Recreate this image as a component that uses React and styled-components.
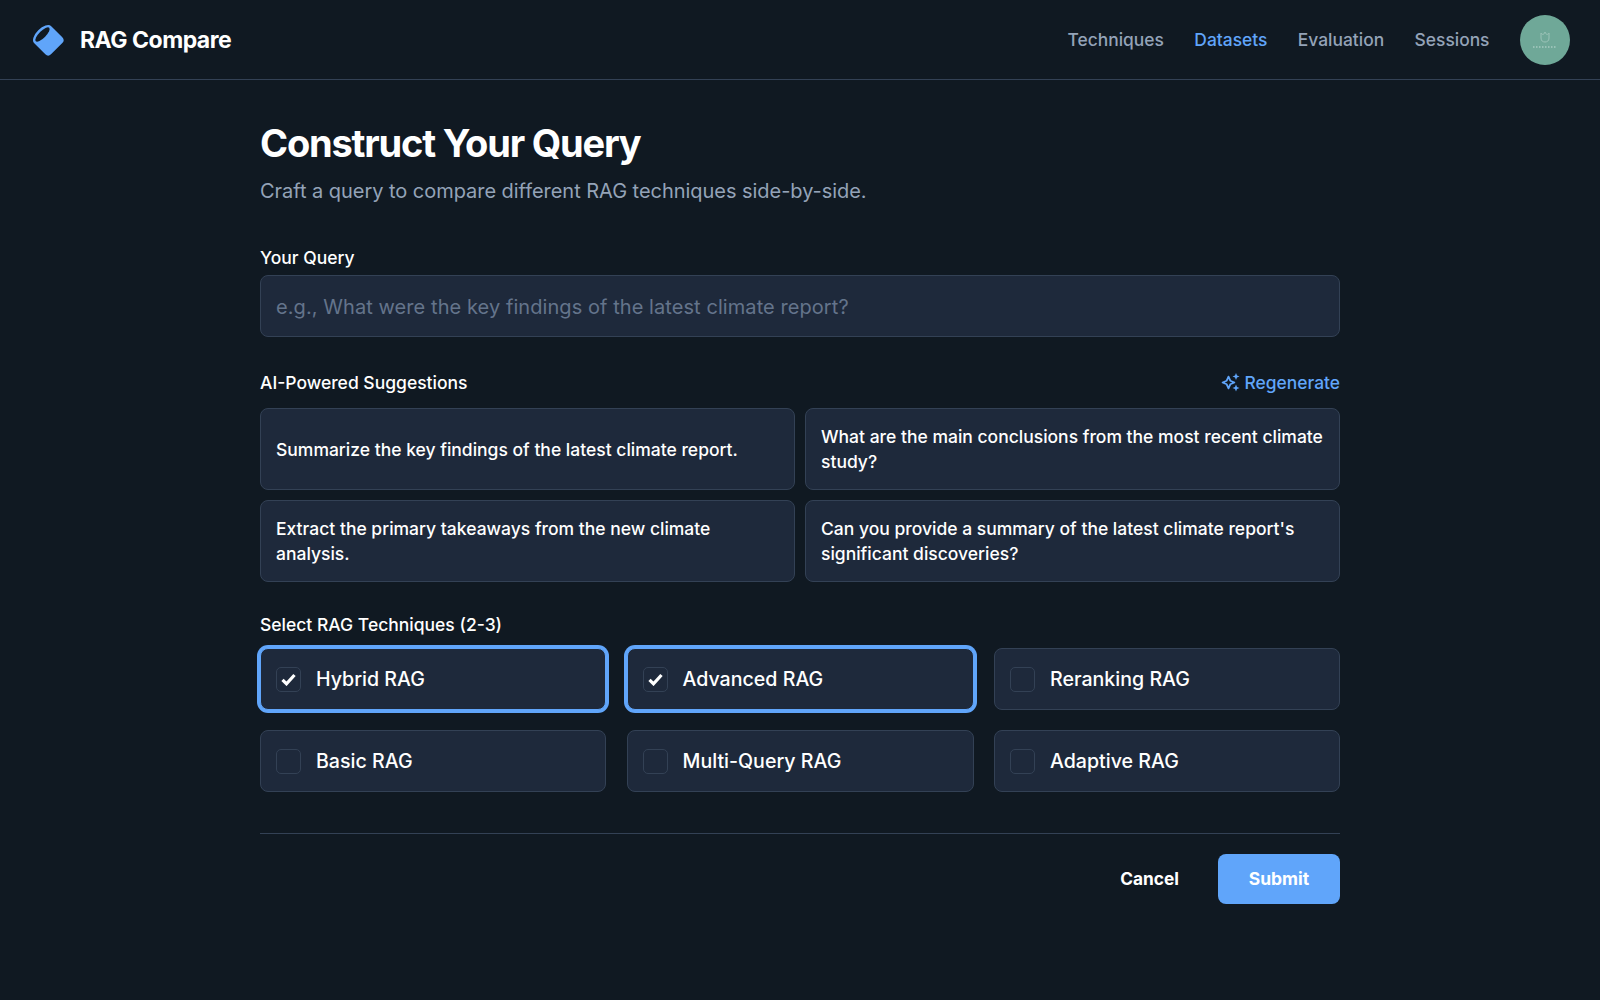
import styled, { createGlobalStyle } from 'styled-components';

const GlobalStyle = createGlobalStyle`
html, body {
  margin: 0;
  padding: 0;
  background-color: #101922;
  font-family: Inter, "Noto Sans", sans-serif;
  color: #ffffff;
}
* {
  box-sizing: border-box;
}
`;

const Page = styled.div`
min-height: 1000px;
display: flex;
flex-direction: column;
`;

const Header = styled.header`
height: 80px;
display: flex;
align-items: center;
justify-content: space-between;
padding: 0 30px 0 32px;
border-bottom: 1px solid #334155;
`;

const Brand = styled.div`
display: flex;
align-items: center;
gap: 16px;
font-size: 23px;
font-weight: 700;
letter-spacing: -0.5px;
`;

const Nav = styled.nav`
display: flex;
align-items: center;
gap: 30.5px;
`;

const NavLink = styled.a`
font-size: 17.4px;
font-weight: 500;
color: ${(props) => (props.$active ? '#60a5fa' : '#94a3b8')};
`;

const Avatar = styled.div`
width: 50px;
height: 50px;
border-radius: 50%;
background-color: #6fa898;
display: flex;
align-items: center;
justify-content: center;
`;

const Main = styled.main`
width: 1080px;
margin: 0 auto;
padding-top: 39px;
display: flex;
flex-direction: column;
`;

const Title = styled.h1`
margin: 0;
font-size: 38px;
line-height: 48px;
font-weight: 700;
letter-spacing: -1.2px;
`;

const Subtitle = styled.p`
margin: 10px 0 0;
font-size: 20px;
line-height: 28px;
letter-spacing: -0.04px;
color: #94a3b8;
`;

const FieldLabel = styled.label`
display: block;
font-size: 17.5px;
font-weight: 500;
line-height: 24px;
`;

const QueryField = styled.div`
margin-top: 41px;
display: flex;
flex-direction: column;
gap: 5px;
`;

const QueryInput = styled.input`
height: 62px;
width: 100%;
padding: 1px 15px 0;
font-family: inherit;
font-size: 20px;
letter-spacing: 0.07px;
color: #ffffff;
background-color: #1e293b;
border: 1px solid #334155;
border-radius: 8px;
outline: none;
&::placeholder {
  color: #64748b;
  opacity: 1;
}
`;

const SuggestionsHead = styled.div`
margin-top: 34px;
display: flex;
align-items: center;
justify-content: space-between;
height: 24px;
`;

const Regenerate = styled.button`
display: flex;
align-items: center;
gap: 5px;
padding: 0 0 2px;
background: none;
border: none;
font-family: inherit;
font-size: 17.4px;
font-weight: 500;
color: #60a5fa;
`;

const SuggestionGrid = styled.div`
margin-top: 13px;
display: grid;
grid-template-columns: 1fr 1fr;
gap: 10px;
`;

const SuggestionCard = styled.div`
height: 82px;
padding: 0 12px 0 15px;
display: flex;
align-items: center;
font-size: 17.5px;
font-weight: 500;
line-height: 25px;
background-color: #1e293b;
border: 1px solid #334155;
border-radius: 8px;
`;

const TechniquesLabel = styled(FieldLabel)`
margin-top: 31px;
`;

const TechniqueGrid = styled.div`
margin-top: 11px;
display: grid;
grid-template-columns: 346px 347px 346px;
column-gap: 20.5px;
row-gap: 20px;
`;

const TechniqueCard = styled.div`
height: 62px;
padding: 0 15px;
display: flex;
align-items: center;
gap: 15px;
font-size: 19.6px;
font-weight: 500;
background-color: #1e293b;
border-radius: 8px;
border: 1px solid ${(props) => (props.$selected ? '#60a5fa' : '#334155')};
${(props) => props.$selected && 'box-shadow: 0 0 0 3px #60a5fa;'}
`;

const CheckBox = styled.span`
width: 25px;
height: 25px;
flex: none;
display: flex;
align-items: center;
justify-content: center;
border: 1px solid #334155;
border-radius: 5px;
`;

const Footer = styled.div`
margin-top: 41px;
padding-top: 20px;
border-top: 1px solid #334155;
display: flex;
justify-content: flex-end;
align-items: center;
gap: 39px;
`;

const CancelButton = styled.button`
padding: 0 0 2px;
background: none;
border: none;
font-family: inherit;
font-size: 17.3px;
font-weight: 700;
color: #ffffff;
`;

const SubmitButton = styled.button`
width: 122px;
height: 50px;
padding: 0 0 2px;
background-color: #60a5fa;
border: none;
border-radius: 8px;
font-family: inherit;
font-size: 17.5px;
font-weight: 700;
color: #ffffff;
`;

function LogoIcon() {
  return (
    <svg width="32" height="32" viewBox="0 0 32 32">
      <g transform="translate(10.5 10.5) rotate(-45)">
        <path d="M-12 0 A12 6 0 0 1 12 0 L12 16 Q12 20 8 20 L-8 20 Q-12 20 -12 16 Z" fill="#60a5fa" />
        <ellipse cx="0" cy="0" rx="9.5" ry="3.4" fill="#101922" />
      </g>
    </svg>
  );
}

function AvatarMark() {
  return (
    <svg width="26" height="20" viewBox="0 0 26 20" fill="none">
      <path d="M9 3 L9 8 C9 11 11 12 13 12 C15 12 17 11 17 8 L17 3 C16 5 14 5 13 2 C12 5 10 5 9 3 Z" stroke="#9cc4b8" strokeWidth="1" />
      <path d="M1 17 H25" stroke="#c4dcd5" strokeWidth="1" strokeDasharray="1.5 1.5" />
    </svg>
  );
}

function SparkleIcon() {
  return (
    <svg width="19" height="20" viewBox="0 0 19 20">
      <path d="M7.5 4.6 L9.3 8.7 L13.4 10.5 L9.3 12.3 L7.5 16.4 L5.7 12.3 L1.6 10.5 L5.7 8.7 Z" fill="none" stroke="#60a5fa" strokeWidth="1.8" strokeLinejoin="round" />
      <path d="M15 1 L16 3.5 L18.5 4.5 L16 5.5 L15 8 L14 5.5 L11.5 4.5 L14 3.5 Z" fill="#60a5fa" />
      <path d="M15 12.5 L16 15 L18.5 16 L16 17 L15 19.5 L14 17 L11.5 16 L14 15 Z" fill="#60a5fa" />
    </svg>
  );
}

function CheckIcon() {
  return (
    <svg width="15" height="13" viewBox="0 0 15 13" fill="none">
      <path d="M1.5 6.8 L5.5 10.8 L13.5 2" stroke="#ffffff" strokeWidth="3.2" />
    </svg>
  );
}

const navItems = ['Techniques', 'Datasets', 'Evaluation', 'Sessions'];

const suggestions = [
  'Summarize the key findings of the latest climate report.',
  'What are the main conclusions from the most recent climate study?',
  'Extract the primary takeaways from the new climate analysis.',
  "Can you provide a summary of the latest climate report's significant discoveries?",
];

const techniques = [
  { name: 'Hybrid RAG', selected: true },
  { name: 'Advanced RAG', selected: true },
  { name: 'Reranking RAG', selected: false },
  { name: 'Basic RAG', selected: false },
  { name: 'Multi-Query RAG', selected: false },
  { name: 'Adaptive RAG', selected: false },
];

export default function App() {
  return (
    <Page>
      <GlobalStyle />
      <Header>
        <Brand>
          <LogoIcon />
          RAG Compare
        </Brand>
        <Nav>
          {navItems.map((item) => (
            <NavLink key={item} $active={item === 'Datasets'}>{item}</NavLink>
          ))}
          <Avatar><AvatarMark /></Avatar>
        </Nav>
      </Header>
      <Main>
        <Title>Construct Your Query</Title>
        <Subtitle>Craft a query to compare different RAG techniques side-by-side.</Subtitle>
        <QueryField>
          <FieldLabel htmlFor="query">Your Query</FieldLabel>
          <QueryInput id="query" placeholder="e.g., What were the key findings of the latest climate report?" />
        </QueryField>
        <SuggestionsHead>
          <FieldLabel>AI-Powered Suggestions</FieldLabel>
          <Regenerate><SparkleIcon />Regenerate</Regenerate>
        </SuggestionsHead>
        <SuggestionGrid>
          {suggestions.map((text) => (
            <SuggestionCard key={text}>{text}</SuggestionCard>
          ))}
        </SuggestionGrid>
        <TechniquesLabel>Select RAG Techniques (2-3)</TechniquesLabel>
        <TechniqueGrid>
          {techniques.map((item) => (
            <TechniqueCard key={item.name} $selected={item.selected}>
              <CheckBox>{item.selected && <CheckIcon />}</CheckBox>
              {item.name}
            </TechniqueCard>
          ))}
        </TechniqueGrid>
        <Footer>
          <CancelButton>Cancel</CancelButton>
          <SubmitButton>Submit</SubmitButton>
        </Footer>
      </Main>
    </Page>
  );
}
